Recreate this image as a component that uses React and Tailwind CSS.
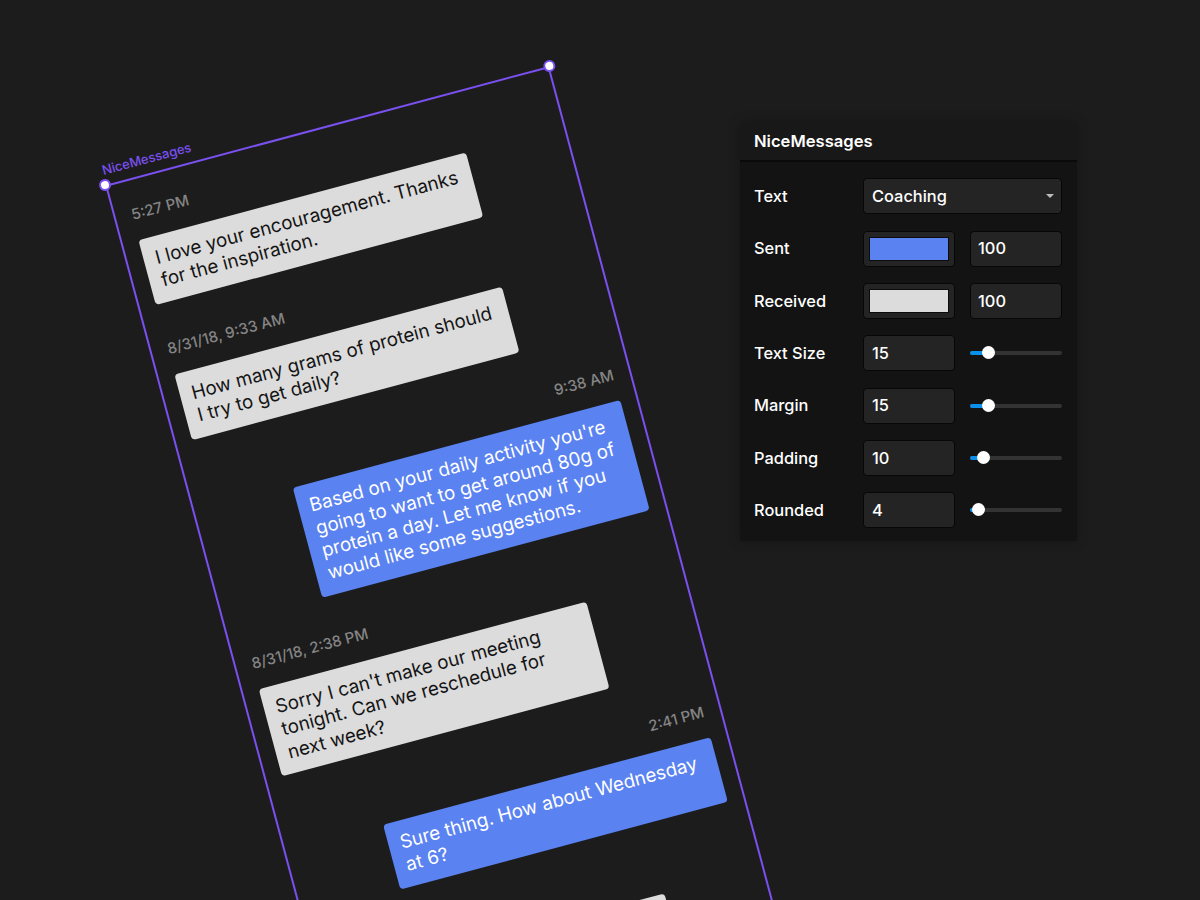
import React from 'react';

const messages = [
    { time: '5:27 PM', sent: false, lines: ['I love your encouragement. Thanks', 'for the inspiration.'] },
    { time: '8/31/18, 9:33 AM', sent: false, lines: ['How many grams of protein should', 'I try to get daily?'] },
    { time: '9:38 AM', sent: true, lines: ["Based on your daily activity you're", 'going to want to get around 80g of', 'protein a day. Let me know if you', 'would like some suggestions.'] },
    { time: '8/31/18, 2:38 PM', sent: false, lines: ["Sorry I can't make our meeting", 'tonight. Can we reschedule for', 'next week?'] },
    { time: '2:41 PM', sent: true, lines: ['Sure thing. How about Wednesday', 'at 6?'] },
    { time: '', sent: false, lines: ['See you then.', ''] },
];

const Field = ({ children, className = '' }) => (
    <div className={`h-9 rounded-[4px] border-[1.5px] border-[#070707] bg-[#242424] flex items-center text-white ${className}`}>
        {children}
    </div>
);

const Swatch = ({ color }) => (
    <Field className="w-[92px] px-[5px]">
        <div className={`w-full h-[24px] border border-[#0c0c0c] ${color}`}></div>
    </Field>
);

const Slider = ({ at }) => (
    <div className="relative w-[92px] h-[4px] rounded-full bg-[#333333]">
        <div className="h-full rounded-full bg-[#0a90e8]" style={{ width: at }}></div>
        <div className="absolute top-[-5px] w-[13px] h-[13px] rounded-full bg-white" style={{ left: at - 6.5 }}></div>
    </div>
);

const Row = ({ label, children }) => (
    <div className="flex items-center h-9">
        <div className="w-[109px] text-white">{label}</div>
        {children}
    </div>
);

const SliderRow = ({ label, value, at }) => (
    <Row label={label}>
        <Field className="w-[92px] px-2">{value}</Field>
        <div className="ml-[15px]">
            <Slider at={at} />
        </div>
    </Row>
);

const ColorRow = ({ label, color }) => (
    <Row label={label}>
        <Swatch color={color} />
        <Field className="w-[92px] px-[7px] ml-[15px]">100</Field>
    </Row>
);

const Message = ({ time, sent, lines }) => (
    <div className={`flex flex-col ${sent ? 'items-end' : 'items-start'}`}>
        <div className="h-5 mb-[16px] text-[15px] leading-5 font-medium text-[#858585]">{time}</div>
        <div className={`w-[339px] rounded-[4px] px-[12px] py-[10.5px] text-[18.8px] leading-[23.2px] ${sent ? 'bg-[#5a82f0] text-white' : 'bg-[#dcdcdc] text-[#141414]'}`}>
            {lines.map((line, index) => (
                <div key={index} className="whitespace-nowrap h-[23.2px]">{line}</div>
            ))}
        </div>
    </div>
);

const App = () => {
    return (
        <div className="relative w-[1200px] h-[900px] overflow-hidden bg-[#1c1c1c] font-['Inter',sans-serif]">
            {/* artboard, tilted on the canvas */}
            <div className="absolute left-[105px] top-[185px] w-[460px] h-[1000px] origin-top-left -rotate-15 border-x-2 border-t-2 border-[#7a50f0]">
                <div className="absolute left-[-1px] top-[-27px] text-[13px] leading-5 font-medium text-[#7a50f0]">NiceMessages</div>
                <div className="absolute left-[-8px] top-[-8px] w-3 h-3 rounded-full bg-white border-2 border-[#7a50f0]"></div>
                <div className="absolute right-[-8px] top-[-8px] w-3 h-3 rounded-full bg-white border-2 border-[#7a50f0]"></div>
                <div className="flex flex-col gap-[36.2px] pt-[23.7px] pl-[16px] pr-[16px]">
                    {messages.map((message, index) => (
                        <Message key={index} {...message} />
                    ))}
                </div>
            </div>

            {/* properties panel */}
            <div className="absolute left-[740px] top-[122px] w-[337px] h-[419px] rounded-[2px] bg-[#131313] shadow-[0_0_12px_rgba(0,0,0,0.25)] text-[16.4px] font-medium">
                <div className="h-[40px] pl-[14px] flex items-center bg-[#181818] border-b-2 border-[#0a0a0a] text-white text-[16.6px] font-semibold">NiceMessages</div>
                <div className="flex flex-col gap-[16.3px] pt-[16.4px] pl-[14px]">
                    <Row label="Text">
                        <Field className="w-[199px] pl-2 pr-[8px] justify-between">
                            Coaching
                            <svg width="8" height="4" viewBox="0 0 8 4" className="mr-[-1px]">
                                <path d="M0 0h8L4 4z" fill="#bdbdbd" />
                            </svg>
                        </Field>
                    </Row>
                    <ColorRow label="Sent" color="bg-[#5a82f0]" />
                    <ColorRow label="Received" color="bg-[#dcdcdc]" />
                    <SliderRow label="Text Size" value="15" at={18} />
                    <SliderRow label="Margin" value="15" at={18} />
                    <SliderRow label="Padding" value="10" at={13.5} />
                    <SliderRow label="Rounded" value="4" at={8.5} />
                </div>
            </div>
        </div>
    );
};

export default App;
